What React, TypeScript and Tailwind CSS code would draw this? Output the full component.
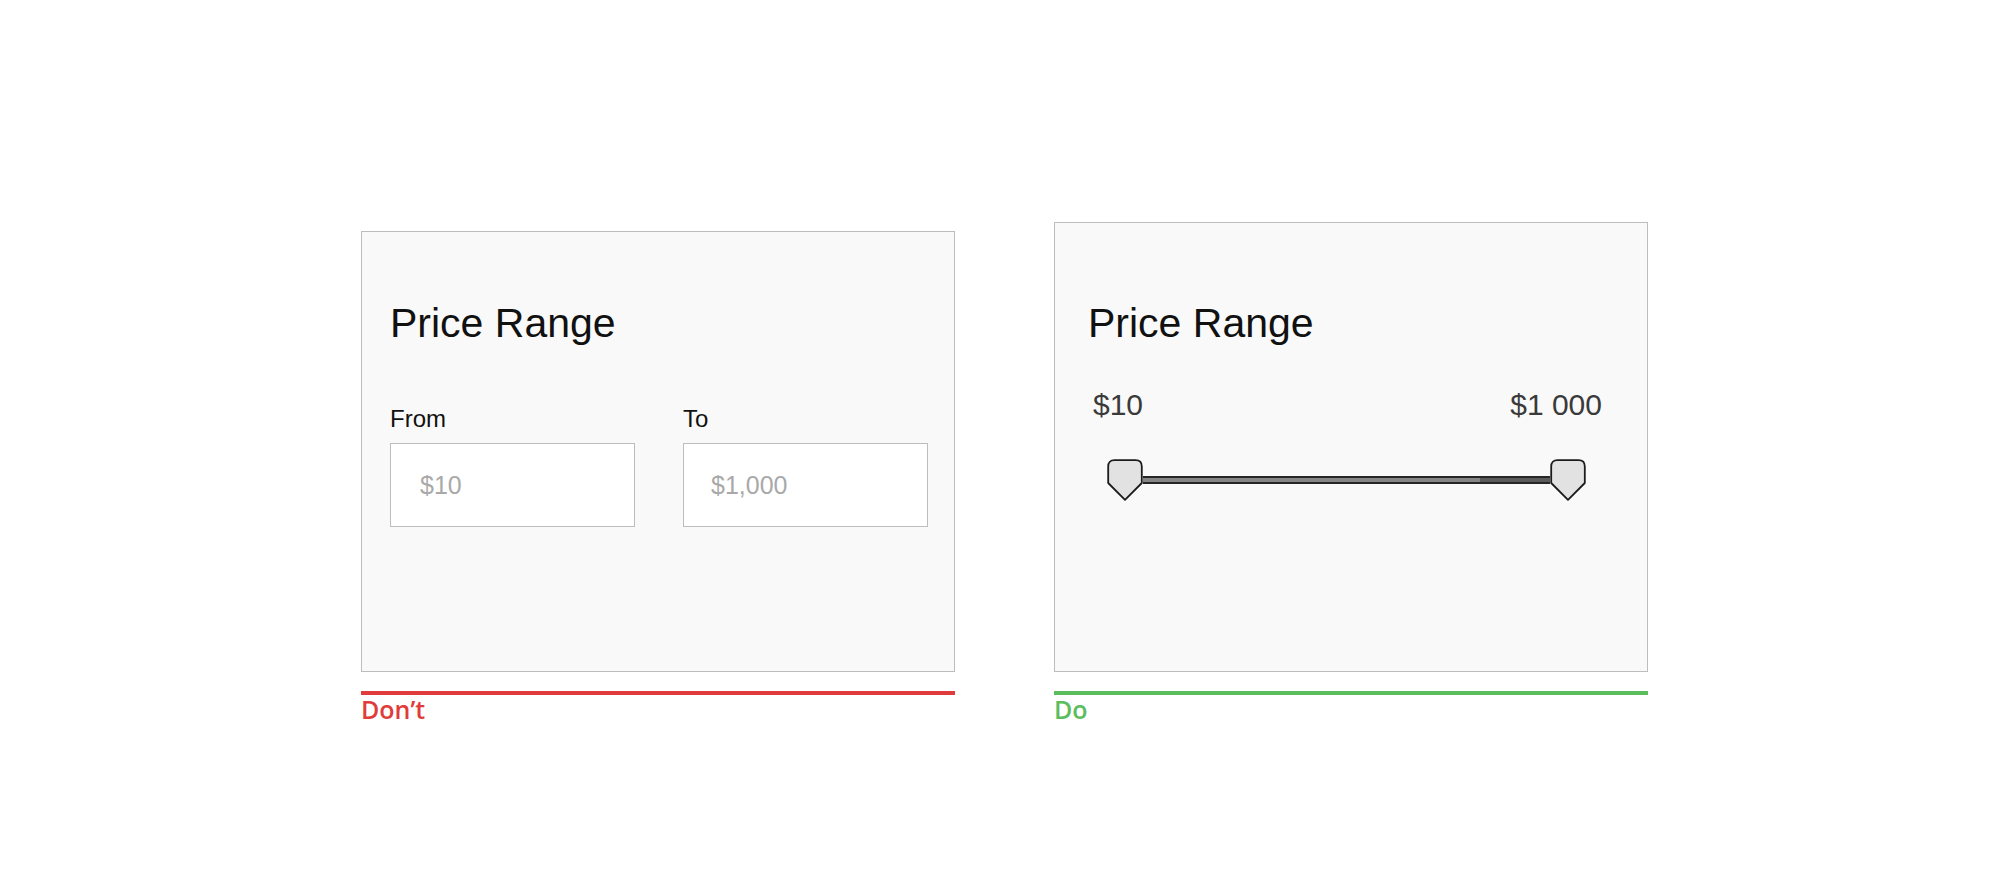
import React from "react";

function Thumb() {
  return (
    <svg width="36" height="42" viewBox="0 0 36 42" className="shrink-0" aria-hidden="true">
      <path
        d="M1.2 7.5 Q1.2 1.2 7.5 1.2 H28.5 Q34.8 1.2 34.8 7.5 V24 L18 40.8 L1.2 24 Z"
        fill="#e2e2e2"
        stroke="#1c1c1c"
        strokeWidth="1.8"
        strokeLinejoin="round"
      />
    </svg>
  );
}

function Caption({ tone, children }: { tone: "bad" | "good"; children: React.ReactNode }) {
  const bad = tone === "bad";
  return (
    <div className="mt-[19px]">
      <div className={bad ? "h-[4px] w-full bg-[#e03c3c]" : "h-[4px] w-full bg-[#5cbd5c]"} />
      <div
        className={
          bad
            ? "font-['Open_Sans',sans-serif] text-[25px] leading-[28px] font-semibold text-[#e03c3c]"
            : "font-['Open_Sans',sans-serif] text-[25px] leading-[28px] font-semibold text-[#5cbd5c]"
        }
      >
        {children}
      </div>
    </div>
  );
}

function InputsCard() {
  return (
    <div className="h-[441px] w-[594px] border border-[#bdbdbd] bg-[#f9f9f9] px-[28px] pt-[67px]">
      <h2 className="text-[41px] leading-[48px] font-normal text-[#111]">Price Range</h2>
      <div className="mt-[58px] grid grid-cols-[245px_245px] gap-x-[48px]">
        <label className="flex flex-col">
          <span className="mb-[10px] text-[24px] leading-[28px] text-[#111]">From</span>
          <input
            placeholder="$10"
            className="h-[84px] w-[245px] border border-[#bdbdbd] bg-white pl-[29px] text-[25px] text-[#111] outline-none placeholder:text-[#a9a9a9]"
          />
        </label>
        <label className="flex flex-col">
          <span className="mb-[10px] text-[24px] leading-[28px] text-[#111]">To</span>
          <input
            placeholder="$1,000"
            className="h-[84px] w-[245px] border border-[#bdbdbd] bg-white pl-[27px] text-[25px] text-[#111] outline-none placeholder:text-[#a9a9a9]"
          />
        </label>
      </div>
    </div>
  );
}

function SliderCard() {
  return (
    <div className="h-[450px] w-[594px] border border-[#bdbdbd] bg-[#f9f9f9] pt-[76px]">
      <h2 className="pl-[33px] text-[41px] leading-[48px] font-normal text-[#111]">Price Range</h2>
      <div className="mt-[40px] flex justify-between pr-[45px] pl-[38px] text-[30px] leading-[36px] text-[#3a3a3a]">
        <span>$10</span>
        <span>$1 000</span>
      </div>
      <div className="mt-[36px] ml-[52px] flex w-[479px] items-center">
        <Thumb />
        <div className="flex h-[8px] flex-1 border-y-2 border-[#262626]">
          <div className="flex-1 bg-[#858585]" />
          <div className="w-[70px] bg-[#5a5a5a]" />
        </div>
        <Thumb />
      </div>
    </div>
  );
}

export default function App() {
  return (
    <div className="h-[883px] w-full bg-white font-['Liberation_Sans',Arial,sans-serif]">
      <div className="flex items-end gap-[99px] pt-[222px] pl-[361px]">
        <div className="flex flex-col">
          <InputsCard />
          <Caption tone="bad">Don’t</Caption>
        </div>
        <div className="flex flex-col">
          <SliderCard />
          <Caption tone="good">Do</Caption>
        </div>
      </div>
    </div>
  );
}
